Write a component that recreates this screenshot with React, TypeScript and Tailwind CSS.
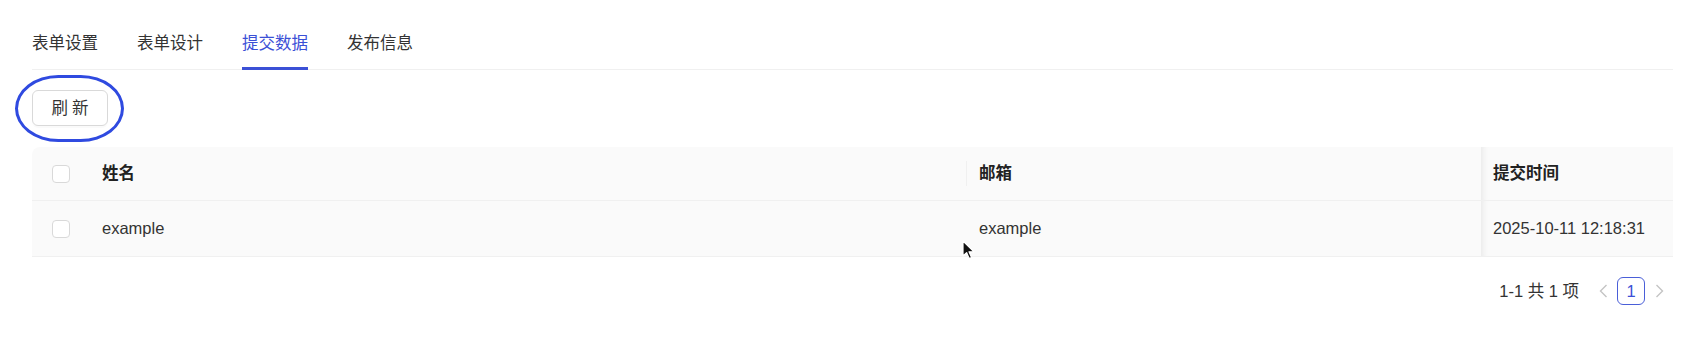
import React from "react";

const tabs = ["表单设置", "表单设计", "提交数据", "发布信息"];
const active = 2;

function Checkbox() {
  return <span className="block w-[18px] h-[18px] rounded-[4px] border border-[#d9d9d9] bg-white" />;
}

export default function App() {
  return (
    <div
      className="relative w-[1686px] h-[338px] bg-white pl-[32px] pr-[13px] text-[16.5px] text-[#333]"
      style={{ fontFamily: '"Liberation Sans", "Noto Sans CJK SC", sans-serif' }}
    >
      {/* tabs */}
      <div className="flex gap-[39px] pt-[31px] border-b border-[#f0f0f0]">
        {tabs.map((t, i) => (
          <div
            key={t}
            className={
              i === active
                ? "leading-[24px] pb-[12px] border-b-[3px] border-[#3b50d6] text-[#3b50d6] -mb-px"
                : "leading-[24px] pb-[12px] border-b-[3px] border-transparent -mb-px"
            }
          >
            {t}
          </div>
        ))}
      </div>

      {/* toolbar */}
      <div className="pt-[20px]">
        <button className="w-[76px] h-[36px] rounded-[6px] border border-[#d9d9d9] bg-white text-[#333] shadow-[0_2px_0_rgba(0,0,0,0.02)] tracking-[4px] pl-[4px]">
          刷新
        </button>
      </div>

      {/* table */}
      <div className="mt-[21px]">
        <div className="flex h-[54px] items-center bg-[#fafafa] rounded-tl-[8px] border-b border-[#f0f0f0] font-bold text-[#222]">
          <div className="w-[58px] flex justify-center">
            <Checkbox />
          </div>
          <div className="w-[876px] pl-[12px] h-full flex items-center">姓名</div>
          <div className="w-[515px] pl-[12px] h-full flex items-center border-l border-[#f0f0f0] [border-image:linear-gradient(transparent_27%,#f0f0f0_27%,#f0f0f0_73%,transparent_73%)_1]">
            邮箱
          </div>
          <div className="flex-1 pl-[12px] h-full flex items-center shadow-[inset_8px_0_6px_-6px_rgba(0,0,0,0.07)]">
            提交时间
          </div>
        </div>
        <div className="flex h-[56px] items-center bg-[#fafafa] border-b border-[#f0f0f0]">
          <div className="w-[58px] flex justify-center">
            <Checkbox />
          </div>
          <div className="w-[876px] pl-[12px]">example</div>
          <div className="w-[515px] pl-[12px] border-l border-transparent">example</div>
          <div className="flex-1 pl-[12px] h-full flex items-center shadow-[inset_8px_0_6px_-6px_rgba(0,0,0,0.07)]">
            2025-10-11 12:18:31
          </div>
        </div>
      </div>

      {/* pagination */}
      <div className="flex justify-end items-center mt-[20px] h-[28px]">
        <span className="mr-[10px]">1-1 共 1 项</span>
        <span className="w-[28px] h-[28px] flex items-center justify-center text-[#c4c4c4]">
          <svg width="9" height="14" viewBox="0 0 9 14" fill="none" stroke="currentColor" strokeWidth="1.4">
            <path d="M7.5 1L1.5 7l6 6" />
          </svg>
        </span>
        <span className="w-[28px] h-[28px] flex items-center justify-center rounded-[6px] border border-[#4a5fd8] text-[#3b50d6]">
          1
        </span>
        <span className="w-[28px] h-[28px] flex items-center justify-center text-[#c4c4c4]">
          <svg width="9" height="14" viewBox="0 0 9 14" fill="none" stroke="currentColor" strokeWidth="1.4">
            <path d="M1.5 1l6 6-6 6" />
          </svg>
        </span>
      </div>

      {/* annotation ellipse */}
      <div className="absolute left-[15px] top-[75px] w-[109px] h-[67px] rounded-[44px/34px] border-[3px] border-[#2f4ae0] pointer-events-none" />

      {/* mouse cursor */}
      <svg className="absolute left-[962px] top-[240px]" width="14" height="20" viewBox="0 0 14 20">
        <path d="M1 1v15l3.6-3.4 2.6 6 2.4-1-2.6-5.8H12z" fill="#111" stroke="#fff" strokeWidth="1.2" strokeLinejoin="round" />
      </svg>
    </div>
  );
}
